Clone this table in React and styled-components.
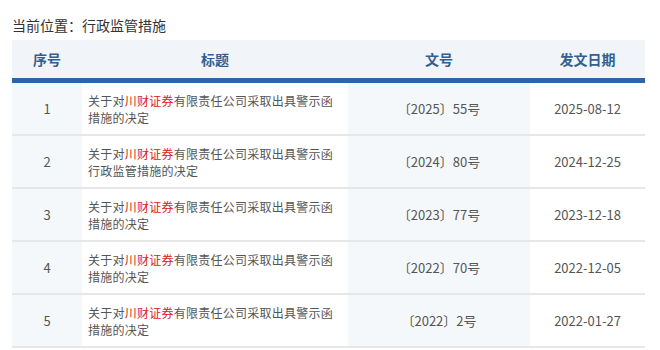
import styled, { createGlobalStyle } from "styled-components";

const rows = [
  { no: 1, tail: "措施的决定", doc: "〔2025〕55号", date: "2025-08-12" },
  { no: 2, tail: "行政监管措施的决定", doc: "〔2024〕80号", date: "2024-12-25" },
  { no: 3, tail: "措施的决定", doc: "〔2023〕77号", date: "2023-12-18" },
  { no: 4, tail: "措施的决定", doc: "〔2022〕70号", date: "2022-12-05" },
  { no: 5, tail: "措施的决定", doc: "〔2022〕2号", date: "2022-01-27" },
];

const Global = createGlobalStyle`
  body {
    margin: 0;
    background: #fff;
    font-family: "Noto Sans CJK SC", "Noto Sans", sans-serif;
  }
`;

function App() {
  return (
    <Page>
      <Global />
      <Crumb>当前位置：行政监管措施</Crumb>
      <Table>
        <HeadRow>
          <HeadCell>序号</HeadCell>
          <HeadCell>标题</HeadCell>
          <HeadCell>文号</HeadCell>
          <HeadCell>发文日期</HeadCell>
        </HeadRow>
        {rows.map((r) => (
          <Row key={r.no}>
            <Cell shaded>{r.no}</Cell>
            <TitleCell>
              <TitleText>
                关于对<Red>川财证券</Red>有限责任公司采取出具警示函{r.tail}
              </TitleText>
            </TitleCell>
            <Cell shaded>{r.doc}</Cell>
            <Cell>{r.date}</Cell>
          </Row>
        ))}
      </Table>
    </Page>
  );
}

export default App;

const Page = styled.div`
  width: 660px;
  height: 350px;
  overflow: hidden;
  padding-left: 12px;
  box-sizing: border-box;
`;

const Crumb = styled.div`
  height: 40px;
  padding-top: 16px;
  box-sizing: border-box;
  font-size: 14px;
  line-height: 18px;
  color: #333;
`;

const Table = styled.div`
  width: 633px;
`;

const grid = `
  display: grid;
  grid-template-columns: 70px 266px 182px 115px;
`;

const HeadRow = styled.div`
  ${grid}
  height: 38px;
  background: #f1f5f9;
  border-bottom: 5px solid #2c66a5;
`;

const HeadCell = styled.div`
  display: flex;
  align-items: center;
  justify-content: center;
  font-size: 14px;
  font-weight: bold;
  color: #345f8f;
`;

const Row = styled.div`
  ${grid}
  height: 53px;
  box-sizing: border-box;
  border-bottom: 2px solid #e7e7e7;
`;

const Cell = styled.div`
  display: flex;
  align-items: center;
  justify-content: center;
  font-size: 13px;
  color: #555;
  background: ${(p) => (p.shaded ? "#f5f8fb" : "#fff")};
`;

const TitleCell = styled.div`
  display: flex;
  align-items: center;
  padding: 0 14px 0 6px;
`;

const TitleText = styled.div`
  font-size: 12px;
  letter-spacing: 0.25px;
  line-height: 17px;
  color: #555;
`;

const Red = styled.span`
  color: #d8231b;
`;
